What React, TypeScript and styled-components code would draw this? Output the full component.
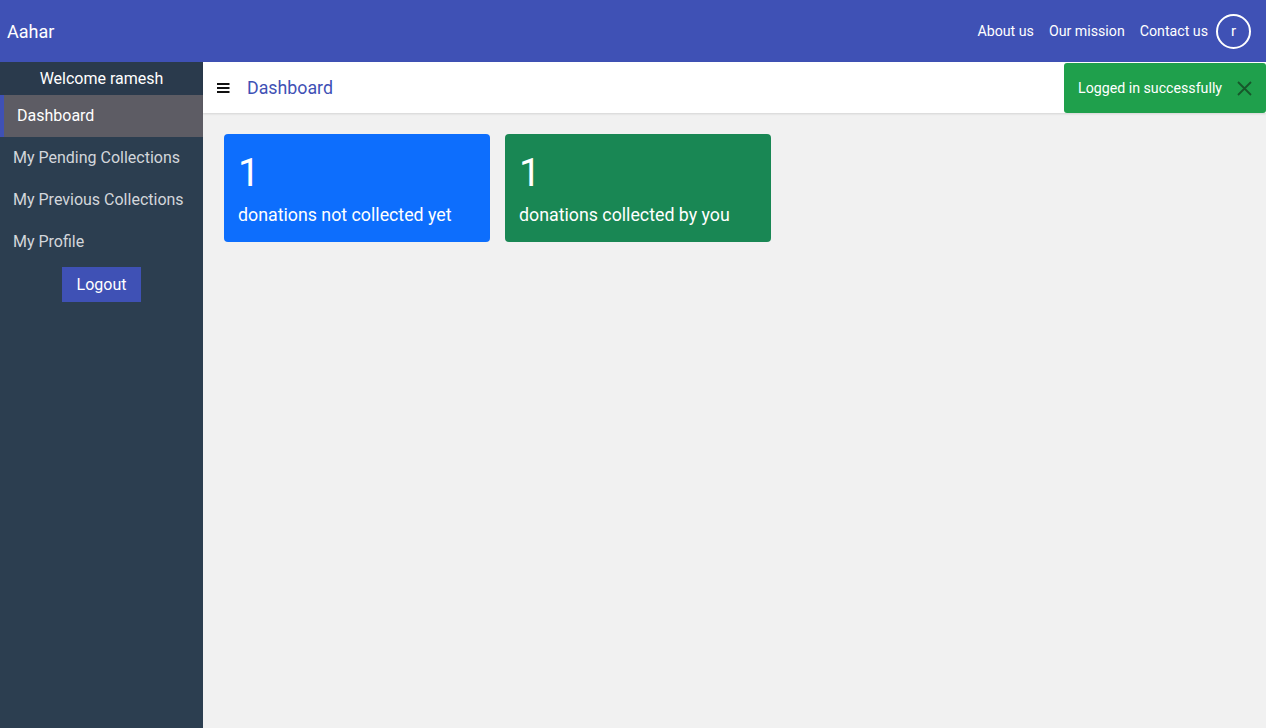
import React from "react";
import styled, { createGlobalStyle } from "styled-components";

const Global = createGlobalStyle`
  html, body { margin: 0; padding: 0; }
  body { font-family: Roboto, "Liberation Sans", sans-serif; background: #f1f1f1; }
  * { box-sizing: border-box; }
`;

const Page = styled.div`
  min-height: 100vh;
  display: flex;
  flex-direction: column;
  position: relative;
`;

const NavBar = styled.header`
  height: 62px;
  background: #3f51b5;
  display: flex;
  align-items: center;
  justify-content: space-between;
  padding: 0 15px 0 7px;
  color: #fff;
`;

const Brand = styled.div`
  font-size: 18px;
`;

const NavLinks = styled.nav`
  display: flex;
  align-items: center;
  gap: 15px;
`;

const NavLink = styled.a`
  color: #fff;
  font-size: 14.2px;
  text-decoration: none;
`;

const Avatar = styled.div`
  width: 35px;
  height: 35px;
  border: 2px solid #fff;
  border-radius: 50%;
  display: flex;
  align-items: center;
  justify-content: center;
  font-size: 15px;
  margin-left: -7px;
`;

const Body = styled.div`
  flex: 1;
  display: flex;
`;

const Sidebar = styled.aside`
  width: 203px;
  background: #2c3e50;
  display: flex;
  flex-direction: column;
  min-height: calc(100vh - 62px);
`;

const Welcome = styled.div`
  height: 33px;
  background: #2a3a4c;
  color: #fff;
  font-size: 16px;
  display: flex;
  align-items: center;
  justify-content: center;
`;

const MenuItem = styled.div<{ $active?: boolean }>`
  height: 42px;
  display: flex;
  align-items: center;
  font-size: 16px;
  padding-left: 13px;
  padding-bottom: 1px;
  color: ${(p) => (p.$active ? "#fff" : "#d3d6db")};
  background: ${(p) => (p.$active ? "#5d5c64" : "transparent")};
  border-left: ${(p) => (p.$active ? "4px solid #3f51b5" : "none")};
`;

const LogoutButton = styled.button`
  align-self: center;
  margin-top: 4px;
  width: 79px;
  height: 35px;
  border: none;
  background: #3f51b5;
  color: #fff;
  font-family: inherit;
  font-size: 16px;
  padding: 0;
`;

const Main = styled.main`
  flex: 1;
  display: flex;
  flex-direction: column;
  background: #f1f1f1;
`;

const TopBar = styled.div`
  height: 51px;
  background: #fff;
  display: flex;
  align-items: center;
  padding-left: 14px;
  gap: 17px;
  box-shadow: 0 1px 2px rgba(0, 0, 0, 0.12);
`;

const PageTitle = styled.div`
  color: #3f51b5;
  font-size: 17.8px;
`;

const Cards = styled.div`
  display: flex;
  gap: 15px;
  padding: 21px;
`;

const Card = styled.div<{ $bg: string }>`
  width: 266px;
  height: 108px;
  background: ${(p) => p.$bg};
  border-radius: 4px;
  color: #fff;
  padding: 15px 14px 12px;
`;

const CardNumber = styled.div`
  font-size: 39px;
  line-height: 48px;
  margin-bottom: 4px;
`;

const CardLabel = styled.div`
  font-size: 17.8px;
  line-height: 27px;
`;

const Toast = styled.div`
  position: absolute;
  top: 63px;
  right: 0;
  width: 202px;
  height: 50px;
  background: #1fa04c;
  border-radius: 3px;
  color: #fff;
  font-size: 14.2px;
  display: flex;
  align-items: center;
  justify-content: space-between;
  padding: 0 14px 0 14px;
`;

const Hamburger = () => (
  <svg width="13" height="12" viewBox="0 0 13 12">
    <rect x="0" y="1" width="12.5" height="2" fill="#111" />
    <rect x="0" y="5" width="12.5" height="2" fill="#111" />
    <rect x="0" y="9" width="12.5" height="2" fill="#111" />
  </svg>
);

const CloseIcon = () => (
  <svg width="15" height="15" viewBox="0 0 15 15">
    <path d="M1 1 L14 14 M14 1 L1 14" stroke="#17572b" strokeWidth="1.8" fill="none" />
  </svg>
);

export default function App() {
  return (
    <Page>
      <Global />
      <NavBar>
        <Brand>Aahar</Brand>
        <NavLinks>
          <NavLink>About us</NavLink>
          <NavLink>Our mission</NavLink>
          <NavLink>Contact us</NavLink>
          <Avatar>r</Avatar>
        </NavLinks>
      </NavBar>
      <Body>
        <Sidebar>
          <Welcome>Welcome ramesh</Welcome>
          <MenuItem $active>Dashboard</MenuItem>
          <MenuItem>My Pending Collections</MenuItem>
          <MenuItem>My Previous Collections</MenuItem>
          <MenuItem>My Profile</MenuItem>
          <LogoutButton>Logout</LogoutButton>
        </Sidebar>
        <Main>
          <TopBar>
            <Hamburger />
            <PageTitle>Dashboard</PageTitle>
          </TopBar>
          <Cards>
            <Card $bg="#0d6efd">
              <CardNumber>1</CardNumber>
              <CardLabel>donations not collected yet</CardLabel>
            </Card>
            <Card $bg="#198754">
              <CardNumber>1</CardNumber>
              <CardLabel>donations collected by you</CardLabel>
            </Card>
          </Cards>
        </Main>
      </Body>
      <Toast>
        <span>Logged in successfully</span>
        <CloseIcon />
      </Toast>
    </Page>
  );
}
